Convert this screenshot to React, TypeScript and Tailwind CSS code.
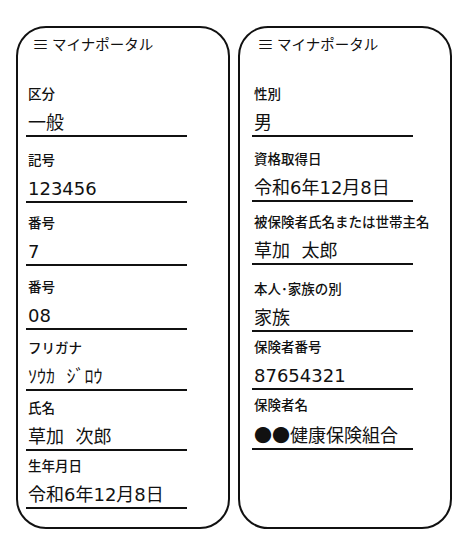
type Field = {
  label: string;
  value: React.ReactNode;
  h: string;
};

const leftFields: Field[] = [
  { label: "区分", value: "一般", h: "h-[83px]" },
  { label: "記号", value: "123456", h: "h-[66px]" },
  { label: "番号", value: "7", h: "h-[63px]" },
  { label: "番号", value: "08", h: "h-[64px]" },
  { label: "フリガナ", value: "ｿｳｶ\u00a0\u00a0ｼﾞﾛｳ", h: "h-[61px]" },
  { label: "氏名", value: "草加\u00a0\u00a0次郎", h: "h-[60px]" },
  { label: "生年月日", value: "令和6年12月8日", h: "h-[58px]" },
];

const rightFields: Field[] = [
  { label: "性別", value: "男", h: "h-[83px]" },
  { label: "資格取得日", value: "令和6年12月8日", h: "h-[65px]" },
  { label: "被保険者氏名または世帯主名", value: "草加\u00a0\u00a0太郎", h: "h-[63px]" },
  { label: "本人･家族の別", value: "家族", h: "h-[67px]" },
  { label: "保険者番号", value: "87654321", h: "h-[58px]" },
  {
    label: "保険者名",
    value: (
      <>
        <span className="font-['Noto_Sans_CJK_JP',sans-serif]">●●</span>健康保険組合
      </>
    ),
    h: "h-[60px]",
  },
];

function PortalCard({ fields, padLeft, headerLeft }: { fields: Field[]; padLeft: string; headerLeft: string }) {
  return (
    <div className={`h-[503px] w-[214px] rounded-[30px] border-2 border-[#111] pt-[6px] ${padLeft}`}>
      <div className={`flex h-5 items-center text-[14.5px] leading-5 text-[#111] ${headerLeft}`}>
        <span className="mr-[3px] text-[17px] leading-5">≡</span>
        <span>マイナポータル</span>
      </div>
      {fields.map((f, i) => (
        <div key={i} className={`flex flex-col justify-end ${f.h}`}>
          <div className="mb-[10px] ml-[2px] whitespace-nowrap text-[13.5px] font-medium leading-4 text-[#111]">
            {f.label}
          </div>
          <div className="ml-[2px] whitespace-nowrap font-['DejaVu_Sans','Noto_Sans_CJK_JP',sans-serif] text-[18px] leading-6 text-[#111]">
            {f.value}
          </div>
          <div className="h-[2px] w-[161px] bg-[#111]" />
        </div>
      ))}
    </div>
  );
}

export default function App() {
  return (
    <div className="h-[549px] w-[473px] bg-white font-['Noto_Sans_CJK_JP',sans-serif]">
      <div className="flex gap-2 pl-4 pt-[26px]">
        <PortalCard fields={leftFields} padLeft="pl-[8px]" headerLeft="pl-[6px]" />
        <PortalCard fields={rightFields} padLeft="pl-[12px]" headerLeft="pl-[5px]" />
      </div>
    </div>
  );
}
